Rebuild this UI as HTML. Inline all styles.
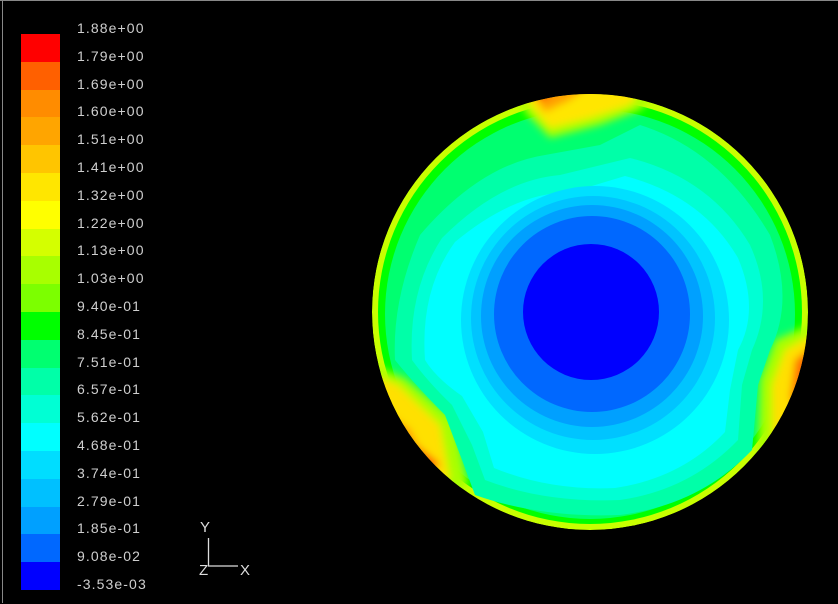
<!DOCTYPE html>
<html><head><style>
html,body{margin:0;padding:0;background:#000;width:838px;height:603px;overflow:hidden}
.bar{position:absolute;left:21px;top:34px;width:39px;height:556px;display:flex;flex-direction:column}
.bar div{flex:1}
.labs{position:absolute;left:77px;top:20px}
.labs div{height:27.8px;font:14px/16px "Liberation Sans",sans-serif;color:#cfcfcf;letter-spacing:1.1px;white-space:nowrap}
</style></head><body>
<div style="position:absolute;left:0;top:0;width:838px;height:1px;background:#888"></div>
<div style="position:absolute;left:2px;top:0;width:1px;height:603px;background:#888"></div>
<div class="bar">
<div style="background:#ff0000"></div><div style="background:#ff6000"></div><div style="background:#ff8c00"></div><div style="background:#ffa500"></div><div style="background:#ffc500"></div><div style="background:#ffe600"></div><div style="background:#ffff00"></div><div style="background:#d4ff00"></div><div style="background:#a8ff00"></div><div style="background:#7cff00"></div><div style="background:#00ff00"></div><div style="background:#00ff70"></div><div style="background:#00ffa8"></div><div style="background:#00ffd4"></div><div style="background:#00ffff"></div><div style="background:#00ddff"></div><div style="background:#00c0ff"></div><div style="background:#00a0ff"></div><div style="background:#0068ff"></div><div style="background:#0000ff"></div>
</div>
<div class="labs">
<div>1.88e+00</div><div>1.79e+00</div><div>1.69e+00</div><div>1.60e+00</div><div>1.51e+00</div><div>1.41e+00</div><div>1.32e+00</div><div>1.22e+00</div><div>1.13e+00</div><div>1.03e+00</div><div>9.40e-01</div><div>8.45e-01</div><div>7.51e-01</div><div>6.57e-01</div><div>5.62e-01</div><div>4.68e-01</div><div>3.74e-01</div><div>2.79e-01</div><div>1.85e-01</div><div>9.08e-02</div><div>-3.53e-03</div>
</div>
<svg width="838" height="603" style="position:absolute;left:0;top:0">
<defs>
<clipPath id="c"><circle cx="590" cy="312" r="218"/></clipPath>
<filter id="b" x="-50%" y="-50%" width="200%" height="200%"><feGaussianBlur stdDeviation="4"/></filter>
</defs>
<g clip-path="url(#c)">
<circle cx="590" cy="312" r="218" fill="#c8ff00"/>
<circle cx="590" cy="312" r="212" fill="#00ff00"/>
<circle cx="590" cy="314" r="205" fill="#00ff70"/>
<g filter="url(#b)">
<path d="M510 80 L670 80 L640 110 L600 125 L550 138 L525 112 Z" fill="#a8ff00"/>
<path d="M515 80 L650 80 L630 105 L590 118 L550 128 L530 105 Z" fill="#ffe600"/>
<path d="M525 85 L590 85 L570 100 L545 112 Z" fill="#ffa000"/>
<path d="M525 88 L555 88 L545 100 Z" fill="#ff2000"/>
<path d="M360 360 L405 378 L455 420 L468 485 L430 505 L360 470 Z" fill="#a8ff00"/>
<path d="M360 370 L398 385 L440 425 L450 480 L420 490 L360 460 Z" fill="#ffe000"/>
<path d="M370 400 L410 430 L430 475 L405 470 L370 440 Z" fill="#ff9000"/>
<path d="M410 440 L440 465 L430 470 Z" fill="#ff2000"/>
<path d="M820 320 L775 340 L760 380 L758 455 L820 470 Z" fill="#a8ff00"/>
<path d="M820 330 L785 350 L772 385 L772 450 L820 455 Z" fill="#ffe000"/>
<path d="M820 340 L795 360 L790 400 L820 420 Z" fill="#ff7000"/>
<path d="M820 350 L805 365 L805 390 L820 395 Z" fill="#ff1000"/>
</g>
<path d="M395 360 Q392 300 420 235 Q480 165 545 155 L600 145 L640 125 Q720 150 770 235 Q795 300 770 350 L758 385 L752 450 Q700 505 620 515 Q540 518 475 495 L462 460 L445 415 Q415 385 395 360 Z" fill="#00ffa8"/>
<path d="M412 360 Q408 290 442 238 Q500 180 560 175 L630 158 Q710 178 750 245 Q775 300 752 350 L742 385 L738 440 Q690 490 620 500 Q545 503 485 480 L472 445 L452 405 Q428 382 412 360 Z" fill="#00ffd4"/>
<path d="M425 360 Q420 290 455 242 Q515 192 572 192 L625 176 Q702 196 738 258 Q760 310 738 350 L730 390 L725 432 Q682 478 615 488 Q550 491 494 468 L483 432 L462 396 Q436 378 425 360 Z" fill="#00ffff"/>
<circle cx="595" cy="320" r="134" fill="#00e0ff"/>
<circle cx="593" cy="318" r="122" fill="#00c4ff"/>
<circle cx="592" cy="316" r="111" fill="#00a0ff"/>
<circle cx="592" cy="314" r="98" fill="#0068ff"/>
<circle cx="591" cy="312" r="68" fill="#0000ff"/>
</g>
<path d="M208.5 538 V566 H238" stroke="#ddd" stroke-width="1.3" fill="none"/>
<g font-family="Liberation Sans,sans-serif" font-size="15" fill="#ddd">
<text x="200" y="532">Y</text><text x="199" y="575">Z</text><text x="240" y="575">X</text>
</g>
</svg>
</body></html>
